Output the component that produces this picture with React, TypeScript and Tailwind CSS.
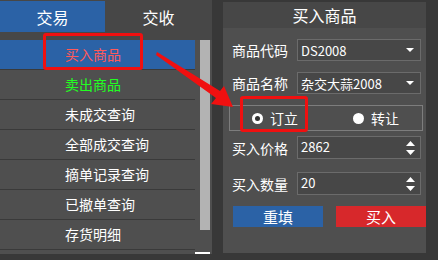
import React from "react";

const FONT = { fontFamily: '"Noto Sans CJK SC", "Liberation Sans", sans-serif' };

const MENU = [
  { label: "买入商品", color: "text-[#ff5a5a]", active: true },
  { label: "卖出商品", color: "text-[#22ff22]" },
  { label: "未成交查询", color: "text-white" },
  { label: "全部成交查询", color: "text-white" },
  { label: "摘单记录查询", color: "text-white" },
  { label: "已撤单查询", color: "text-white" },
  { label: "存货明细", color: "text-white" },
];

function Caret() {
  return (
    <svg width="8" height="6" viewBox="0 0 8 6" className="shrink-0">
      <path d="M0 1 H8 L4 5 Z" fill="#fff" />
    </svg>
  );
}

function Spinner() {
  return (
    <svg width="9" height="14" viewBox="0 0 9 14" className="shrink-0">
      <path d="M4.5 0 L9 5 H0 Z" fill="#fff" />
      <path d="M0 9 H9 L4.5 14 Z" fill="#fff" />
    </svg>
  );
}

function SelectRow({ label, value }: { label: string; value: string }) {
  return (
    <div className="flex items-center">
      <span className="w-[65px] text-[14px] text-white leading-none">{label}</span>
      <div className="w-[124px] h-[22px] border border-[#6b6b6b] bg-[#474747] flex items-center pl-[3px] pr-[6px]">
        <span className="flex-1 text-[13px] text-white leading-none">{value}</span>
        <Caret />
      </div>
    </div>
  );
}

function NumberRow({ label, value }: { label: string; value: string }) {
  return (
    <div className="flex items-center">
      <span className="w-[65px] text-[14px] text-white leading-none">{label}</span>
      <div className="w-[124px] h-[23px] border border-[#6b6b6b] bg-[#474747] flex pl-[3px] pr-[5px]">
        <span className="flex-1 text-[13px] text-white leading-none pt-[3px]">{value}</span>
        <div className="flex items-center"><Spinner /></div>
      </div>
    </div>
  );
}

export default function App() {
  return (
    <div className="relative w-[438px] h-[260px] bg-[#383838] flex overflow-hidden" style={FONT}>
      {/* left: menu */}
      <div className="w-[212px] h-[254px] bg-[#4f4f4f] flex flex-col">
        <div className="h-[32px] flex bg-[#474747] pt-[1px]">
          <div className="w-[105px] bg-[#2b62a6] flex items-center justify-center text-white text-[16px]">交易</div>
          <div className="flex-1 flex items-center justify-center text-white text-[16px]">交收</div>
        </div>
        <div className="h-[8px] bg-[#474747]" />
        <div className="flex flex-1">
          <div className="w-[195px] flex flex-col">
            {MENU.map((m) => (
              <div
                key={m.label}
                className={`h-[30px] border-b border-[#3a3a3a] flex items-center pl-[65px] text-[14px] ${m.color} ${m.active ? "bg-[#2b62a6]" : ""}`}
              >
                {m.label}
              </div>
            ))}
          </div>
          <div className="flex-1 pl-[5px] flex flex-col">
            <div className="w-[10px] h-[190px] bg-[#b3b3b3]" />
            <div className="mt-auto w-[15px] h-[2px] bg-white -ml-[5px]" />
          </div>
        </div>
      </div>

      {/* gutter */}
      <div className="w-[11px]" />

      {/* right: buy form */}
      <div className="w-[203px] h-[251px] mt-[2px] bg-[#4f4f4f] rounded-tr-[3px] flex flex-col">
        <div className="h-[26px] bg-[#474747] flex items-center justify-center text-white text-[16px]">买入商品</div>
        <div className="pl-[9px] mt-[11px]">
          <SelectRow label="商品代码" value="DS2008" />
        </div>
        <div className="pl-[9px] mt-[11px]">
          <SelectRow label="商品名称" value="杂交大蒜2008" />
        </div>
        <div className="ml-[6px] mr-[3px] mt-[11px] h-[26px] border border-[#7d7d7d] flex items-center">
          <div className="flex items-center ml-[22px]">
            <span className="w-[11px] h-[11px] rounded-full bg-white flex items-center justify-center">
              <span className="w-[5px] h-[5px] rounded-full bg-[#333]" />
            </span>
            <span className="ml-[7px] text-[14px] text-white">订立</span>
          </div>
          <div className="flex items-center ml-[55px]">
            <span className="w-[11px] h-[11px] rounded-full bg-white" />
            <span className="ml-[7px] text-[14px] text-white">转让</span>
          </div>
        </div>
        <div className="pl-[9px] mt-[5px]">
          <NumberRow label="买入价格" value="2862" />
        </div>
        <div className="pl-[9px] mt-[13px]">
          <NumberRow label="买入数量" value="20" />
        </div>
        <div className="flex gap-[13px] pl-[10px] mt-[11px]">
          <button className="w-[90px] h-[21px] bg-[#2b62a6] text-white text-[15px] leading-none">重填</button>
          <button className="w-[90px] h-[21px] bg-[#d7282b] text-white text-[15px] leading-none">买入</button>
        </div>
      </div>

      {/* red annotations */}
      <div className="absolute left-[43px] top-[33px] w-[100px] h-[37px] border-[3px] border-[#f01010] rounded-[3px]" />
      <div className="absolute left-[240px] top-[96px] w-[68px] h-[36px] border-[3px] border-[#f01010] rounded-[3px]" />
      <svg className="absolute left-0 top-0" width="438" height="260" viewBox="0 0 438 260">
        <path d="M157 52 L220 91 L224 86 L233 107 L211 104 L216 98 L156 55 Z" fill="#f01010" />
      </svg>
    </div>
  );
}
